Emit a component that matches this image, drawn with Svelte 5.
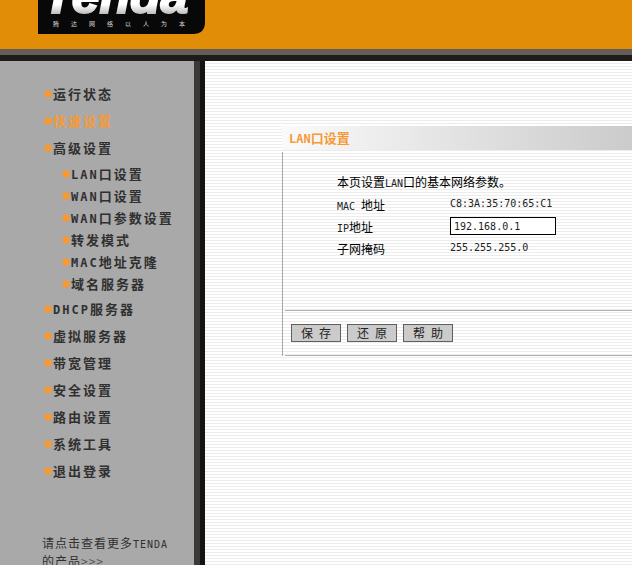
<script>
    let ip = $state("192.168.0.1");
    let current = $state("快速设置");

    const menu = [
        { text: "运行状态" },
        { text: "快速设置" },
        {
            text: "高级设置",
            items: [
                { en: "LAN", text: "口设置" },
                { en: "WAN", text: "口设置" },
                { en: "WAN", text: "口参数设置" },
                { text: "转发模式" },
                { en: "MAC", text: "地址克隆" },
                { text: "域名服务器" },
            ],
        },
        { en: "DHCP", text: "服务器" },
        { text: "虚拟服务器" },
        { text: "带宽管理" },
        { text: "安全设置" },
        { text: "路由设置" },
        { text: "系统工具" },
        { text: "退出登录" },
    ];

    function reset() {
        ip = "192.168.0.1";
    }
</script>

{#snippet entry(item)}
    <a
        href="#menu"
        class:active={item.text === current}
        onclick={() => (current = item.text)}
    >
        <svg class="dot" viewBox="0 0 10 10" aria-hidden="true">
            <circle cx="5" cy="5" r="3" />
            <path d="M5 0.5V9.5M0.5 5H9.5M2 2L8 8M8 2L2 8" />
        </svg>
        <span
            >{#if item.en}<span class="en">{item.en}</span
                >{/if}{item.text}</span
        >
    </a>
{/snippet}

<div class="page">
    <header>
        <svg class="logo" viewBox="0 0 167 34" role="img" aria-label="Tenda">
            <defs>
                <linearGradient id="shine" x1="0" y1="0" x2="0" y2="1">
                    <stop offset="0.65" stop-color="#ffffff" />
                    <stop offset="0.82" stop-color="#bcbcbc" />
                </linearGradient>
            </defs>
            <path d="M0 0H167V22Q167 34 155 34H0Z" fill="#080808" />
            <text class="brand" x="5" y="13">Tenda</text>
            <text class="slogan" x="15" y="26">腾达网络以人为本</text>
        </svg>
    </header>

    <div class="body">
        <nav>
            <ul class="menu">
                {#each menu as item}
                    <li>
                        {@render entry(item)}
                        {#if item.items}
                            <ul class="submenu">
                                {#each item.items as sub}
                                    <li>{@render entry(sub)}</li>
                                {/each}
                            </ul>
                        {/if}
                    </li>
                {/each}
            </ul>
            <a class="more" href="#products"
                >请点击查看更多<span class="en">TENDA</span><br />的产品<span
                    class="arrows">&gt;&gt;&gt;</span
                ></a
            >
        </nav>

        <main>
            <h1><span class="en">LAN</span>口设置</h1>
            <form class="panel" onsubmit={(e) => e.preventDefault()}>
                <div class="fields">
                    <p>
                        本页设置<span class="en">LAN</span>口的基本网络参数。
                    </p>
                    <div class="row">
                        <span class="label"
                            ><span class="en">MAC&nbsp;</span>地址</span
                        >
                        <span class="en">C8:3A:35:70:65:C1</span>
                    </div>
                    <div class="row">
                        <label class="label" for="ip"
                            ><span class="en">IP</span>地址</label
                        >
                        <input id="ip" class="en" type="text" bind:value={ip} />
                    </div>
                    <div class="row">
                        <span class="label">子网掩码</span>
                        <span class="en">255.255.255.0</span>
                    </div>
                </div>
                <div class="actions">
                    <button type="submit">保&ensp;存</button>
                    <button type="button" onclick={reset}>还&ensp;原</button>
                    <button type="button">帮&ensp;助</button>
                </div>
            </form>
        </main>
    </div>
</div>

<style>
    :global(body) {
        margin: 0;
        overflow: hidden;
    }

    .page {
        height: 100vh;
        display: flex;
        flex-direction: column;
        overflow: hidden;
        font-family: "Noto Sans CJK SC", sans-serif;
        font-size: 12px;
        color: #000;
    }

    .en {
        font-family: "DejaVu Sans Mono", monospace;
        font-size: 10px;
        line-height: 1;
    }

    header {
        flex: none;
        height: 49px;
        padding-left: 38px;
        background: #e28d08;
        border-bottom: 6px solid #625d58;
        box-shadow: 0 6px 0 #1e1b19;
        margin-bottom: 6px;
    }

    .logo {
        display: block;
        width: 167px;
        height: 34px;
    }

    .brand {
        font: italic bold 50px "Liberation Sans", sans-serif;
        fill: url(#shine);
        stroke: url(#shine);
        stroke-width: 2px;
    }

    .slogan {
        font-size: 6px;
        letter-spacing: 12px;
        fill: #d8d8d8;
    }

    .body {
        flex: 1;
        display: flex;
        min-height: 0;
    }

    /* Sidebar */
    nav {
        flex: none;
        width: 194px;
        background: #a9a9a9;
        border-right: 6px solid #3b3935;
        box-shadow: 5px 0 0 #151413;
        margin-right: 5px;
    }

    ul {
        list-style: none;
        margin: 0;
        padding: 0;
    }

    .menu {
        padding: 19px 0 0 43px;
        font-size: 13px;
        font-weight: bold;
        letter-spacing: 2px;
        line-height: 27px;
    }

    .menu .en {
        font-size: 12px;
    }

    .submenu {
        padding: 2px 0 0 18px;
        line-height: 22px;
    }

    nav a {
        display: flex;
        align-items: center;
        color: #303030;
        text-decoration: none;
        white-space: nowrap;
    }

    nav a.active {
        color: #f79a36;
    }

    .dot {
        flex: none;
        width: 10px;
        height: 10px;
        fill: #ff9828;
        stroke: #ff9828;
        stroke-width: 0.7;
    }

    nav .more {
        display: block;
        margin: 50px 0 0 42px;
        letter-spacing: 1px;
        line-height: 18px;
    }

    .arrows {
        color: #555;
    }

    /* Content */
    main {
        flex: 1;
        padding: 65px 0 0 77px;
        background: repeating-linear-gradient(
            #fff 0,
            #fff 2px,
            #ececec 2px,
            #ececec 3px
        );
    }

    h1 {
        margin: 0;
        padding-left: 7px;
        font-size: 13px;
        line-height: 24px;
        color: #f79a36;
        background: linear-gradient(90deg, #fafafa, #cbcbcb);
    }

    h1 .en {
        font-size: 12px;
    }

    .panel {
        margin-top: 2px;
        border-left: 1px solid #a8a8a8;
        padding-left: 2px;
    }

    .fields {
        height: 139px;
        padding: 19px 0 0 52px;
        border-bottom: 1px solid #b0b0b0;
    }

    .fields p {
        margin: 0;
        line-height: 22px;
    }

    .fields .en {
        color: #222;
    }

    .row {
        display: flex;
        align-items: center;
        height: 22px;
    }

    .label {
        width: 113px;
    }

    input {
        box-sizing: border-box;
        width: 106px;
        height: 18px;
        padding: 0 3px;
        border: 1px solid #000;
        background: #fff;
    }

    .actions {
        display: flex;
        gap: 6px;
        padding: 13px 6px;
        border-bottom: 1px solid #b0b0b0;
    }

    button {
        width: 50px;
        height: 18px;
        padding: 0;
        border: 1px solid #606060;
        background: #cbcbcb;
        color: #222;
        font-family: inherit;
        font-size: 12px;
        line-height: 16px;
    }
</style>
